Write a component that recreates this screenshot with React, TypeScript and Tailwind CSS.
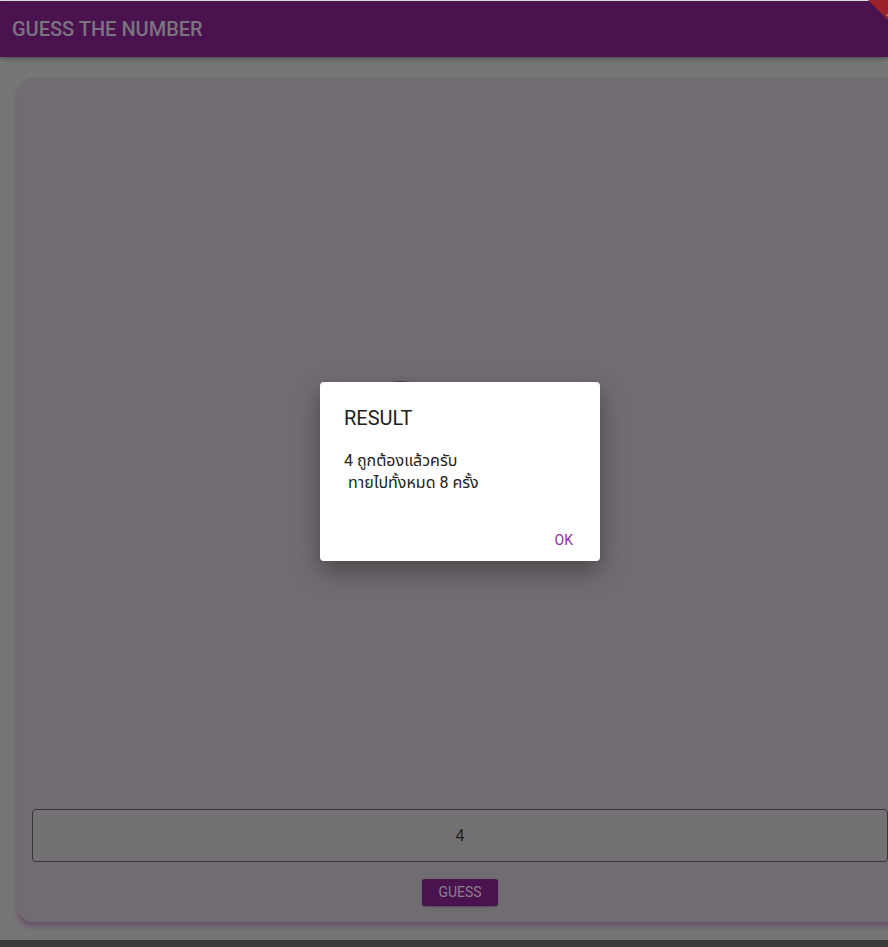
export default function App() {
  return (
    <div className="relative w-[888px] h-[947px] overflow-hidden bg-[#767676] flex flex-col font-['Roboto','Noto_Sans_Thai','Noto_Sans',sans-serif]">
      <div className="h-px bg-[#e4e4e4]" />
      <header className="relative z-10 h-[56px] bg-[#4a1350] flex items-center px-3 shadow-[0_2px_4px_rgba(0,0,0,0.3)]">
        <h1 className="text-[20px] font-medium text-[#7a7480]">GUESS THE NUMBER</h1>
      </header>
      <svg className="absolute top-0 right-0 z-20" width="21" height="21" viewBox="0 0 21 21">
        <polygon points="1,0 21,0 21,20" fill="#9a2228" />
        <circle cx="20" cy="15" r="0.8" fill="#d8b0b0" />
      </svg>

      <main className="flex-1 pl-[17px] pt-[21px]">
        <div className="w-[886px] h-[844px] bg-[#716c71] rounded-[16px] flex flex-col px-[15px] pb-[16px] shadow-[0_5px_4px_rgba(100,70,100,0.65)]">
          <div className="flex-1 flex items-center justify-center">
            <div className="w-[126px] h-[126px] rounded-full border border-[#48434a] mr-[118px]" />
          </div>
          <div className="h-[53px] rounded-[4px] border border-[#363436] bg-[#747174] flex items-center justify-center text-[16px] text-[#1f1f1f]">
            4
          </div>
          <button className="mt-[17px] mx-auto w-[76px] h-[27px] rounded-[3px] bg-[#4a1350] text-[14px] text-[#8a7f8e] shadow-[0_1px_2px_rgba(0,0,0,0.3)]">
            GUESS
          </button>
        </div>
      </main>
      <div className="h-[7px] bg-[#3a3b3a]" />

      <div className="absolute left-[320px] top-[382px] w-[280px] h-[179px] bg-white rounded-[4px] shadow-[0_10px_24px_rgba(0,0,0,0.35)] flex flex-col">
        <h2 className="pl-6 pt-6 text-[20px] leading-[24px] text-[#212121]">RESULT</h2>
        <p className="pl-6 pt-5 text-[16px] leading-[22px] text-[#222222] whitespace-pre">
          {"4 ถูกต้องแล้วครับ\n ทายไปทั้งหมด 8 ครั้ง"}
        </p>
        <div className="flex-1" />
        <div className="h-[42px] flex items-center justify-end pr-[27px]">
          <button className="text-[14px] text-[#8e2fa0]">OK</button>
        </div>
      </div>
    </div>
  );
}
